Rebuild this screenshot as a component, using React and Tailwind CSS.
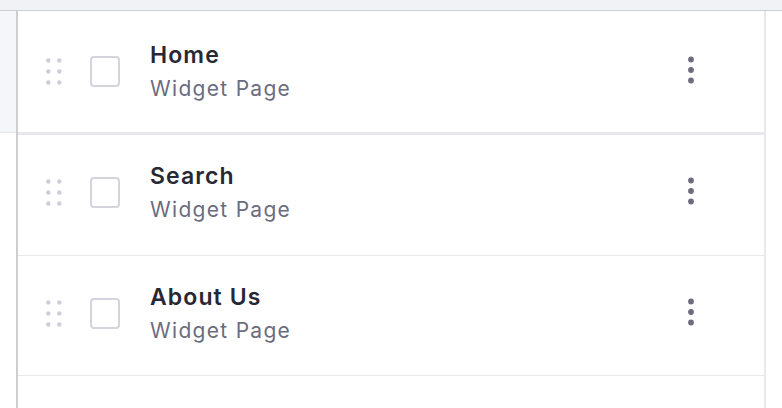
import React from 'react'

const pages = [
  { title: 'Home', kind: 'Widget Page', h: 'h-[124px]', pad: 'pb-0', border: 'border-b-[3px]' },
  { title: 'Search', kind: 'Widget Page', h: 'h-[121px]', pad: 'pb-[5px]', border: 'border-b' },
  { title: 'About Us', kind: 'Widget Page', h: 'h-[120px]', pad: 'pb-[4px]', border: 'border-b' },
]

function DragHandle() {
  return (
    <svg width="16" height="27" viewBox="0 0 16 27" className="shrink-0">
      {[2.5, 13.5, 24.5].map((y) =>
        [2.3, 13.3].map((x) => <circle key={`${x}-${y}`} cx={x} cy={y} r={2.2} fill="#cdced9" />)
      )}
    </svg>
  )
}

function Kebab() {
  return (
    <svg width="16" height="28" viewBox="0 0 16 28" className="shrink-0 mb-[3px]">
      {[3.5, 14, 24.5].map((y) => (
        <circle key={y} cx={8} cy={y} r={2.9} fill="#6b6c7e" />
      ))}
    </svg>
  )
}

function PageRow({ page }) {
  return (
    <div className={`${page.h} ${page.pad} ${page.border} border-[#e7e7ed] flex items-center pl-[28px] pr-[65px] shrink-0`}>
      <DragHandle />
      <div className="ml-[28px] w-[30px] h-[31px] rounded-[4px] border-2 border-[#d3d4dc] bg-white shrink-0" />
      <div className="ml-[30px] pt-[1px] flex flex-col">
        <span className="text-[23px] leading-[35px] font-semibold tracking-[1.1px] text-[#272833]">{page.title}</span>
        <span className="-mt-[2px] text-[21px] leading-[35px] tracking-[1.3px] text-[#6b6c7e]">{page.kind}</span>
      </div>
      <div className="flex-1" />
      <Kebab />
    </div>
  )
}

export default function App() {
  return (
    <div className="w-[782px] h-[408px] bg-white flex flex-col overflow-hidden font-['Inter',sans-serif]">
      <div className="h-[11px] bg-[#f1f2f5] border-b border-[#cdced3] shrink-0" />
      <div className="flex flex-1">
        <div className="w-[16px] flex flex-col">
          <div className="h-[122px] bg-[#f5f6f9] border-b border-[#e7e7ed]" />
        </div>
        <div className="w-[2px] bg-[#cdcdd2]" />
        <div className="w-[748px] flex flex-col border-r-2 border-[#e7e7ed]">
          {pages.map((p) => (
            <PageRow key={p.title} page={p} />
          ))}
        </div>
        <div className="flex-1" />
      </div>
    </div>
  )
}
